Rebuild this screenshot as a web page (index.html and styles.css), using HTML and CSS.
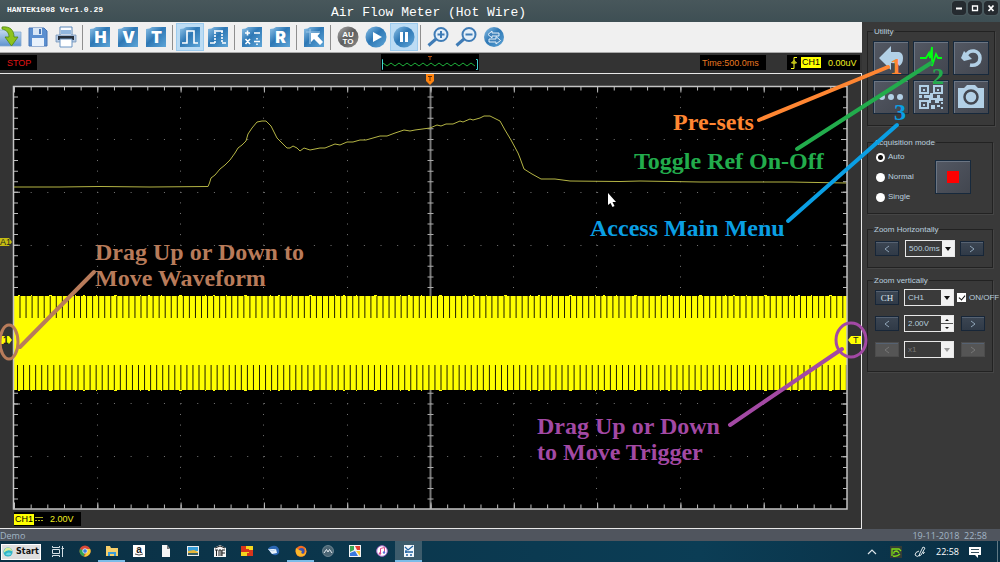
FILE: index.html
```
<!DOCTYPE html>
<html lang="en">
<head>
<meta charset="utf-8">
<title>HANTEK1008 Ver1.0.29</title>
<link rel="stylesheet" href="styles.css">
</head>
<body>
<svg class="defs" aria-hidden="true">
  <defs>
    <linearGradient id="blue" x1="0" y1="0" x2="1" y2="1"><stop offset="0" stop-color="#8fc3e8"/><stop offset=".45" stop-color="#2e78b5"/><stop offset="1" stop-color="#5fa6d8"/></linearGradient>
    <linearGradient id="grey" x1="0" y1="0" x2="1" y2="1"><stop offset="0" stop-color="#aaa"/><stop offset=".5" stop-color="#5c5c5c"/><stop offset="1" stop-color="#8d8d8d"/></linearGradient>
    <linearGradient id="folder" x1="0" y1="0" x2="0" y2="1"><stop offset="0" stop-color="#c3d9f0"/><stop offset="1" stop-color="#5e93cf"/></linearGradient>
    <path id="tile" d="M1 3Q5 3 7 1H21V21H1Z" fill="url(#blue)"/>
  </defs>
</svg>

<header class="titlebar">
  <span class="app-name">HANTEK1008 Ver1.0.29</span>
  <h1 class="title">Air Flow Meter (Hot Wire)</h1>
  <div class="window-buttons">
    <button aria-label="Minimize"><svg viewBox="0 0 14 14"><path d="M4 7.500H10" stroke-width="2"/></svg></button>
    <button aria-label="Maximize"><svg viewBox="0 0 14 14"><path d="M4.500 5H9.500V9.500H4.500Z" stroke-width="1.300"/></svg></button>
    <button aria-label="Close"><svg viewBox="0 0 14 14"><path d="M4.500 4.500L9.500 10M9.500 4.500L4.500 10" stroke-width="1.800"/></svg></button>
  </div>
</header>

<main class="main">
  <section class="left">
    <nav class="toolbar">
      <button aria-label="Open"><svg viewBox="0 0 22 22"><path d="M0 4H8L10 6H22V20H0Z" fill="url(#folder)" stroke="#85a9d2" stroke-width=".8"/><path d="M3 1C11 0 15 4 15 11H19L12.500 20L6 11H10C10 7 8 4 3 3Z" fill="#8fc31c" stroke="#4e8612" stroke-width=".8"/></svg></button>
      <button aria-label="Save"><svg viewBox="0 0 22 22"><path d="M2 2H17L20 5V20H2Z" fill="#5b8fd0" stroke="#4775b5"/><path d="M6 2H15V9H6Z" fill="#d8e6f5"/><path d="M12 3H14V8H12Z" fill="#4775b5"/><path d="M5 12H17V20H5Z" fill="#e8f1fb"/></svg></button>
      <button aria-label="Print"><svg viewBox="0 0 22 22"><path d="M5 1H17V10H5Z" fill="#fafcff" stroke="#5b87b8"/><path d="M6 4H16V8H6Z" fill="#91b7df"/><path d="M1 9H21V16H1Z" fill="#b7cbe4" stroke="#6c8cb5" stroke-width=".7"/><path d="M3 10H19V14H3Z" fill="#27303b"/><path d="M5 13H17V21H5Z" fill="#fff" stroke="#6a94c3"/></svg></button>
      <span class="sep"></span>
      <button aria-label="Horizontal"><svg viewBox="0 0 22 22"><use href="#tile"/><text class="tile-letter" x="11.500" y="17">H</text></svg></button>
      <button aria-label="Vertical"><svg viewBox="0 0 22 22"><use href="#tile"/><text class="tile-letter" x="11.500" y="17">V</text></svg></button>
      <button aria-label="Trigger"><svg viewBox="0 0 22 22"><use href="#tile"/><text class="tile-letter" x="11.500" y="17">T</text></svg></button>
      <span class="sep"></span>
      <button class="active" aria-label="Line display"><svg viewBox="0 0 22 22"><use href="#tile"/><path d="M3 17H8V5H15V17H19" class="tile-line"/></svg></button>
      <button aria-label="Dot display"><svg viewBox="0 0 22 22"><use href="#tile"/><path d="M3 17H8M15 17H19M7 5H16" class="tile-line"/><path d="M8 17V5M15 5V17" class="tile-line dashed"/></svg></button>
      <span class="sep"></span>
      <button aria-label="Math"><svg viewBox="0 0 22 22"><use href="#tile"/><path d="M4 7H9M6.500 4.500V9.500M13 7H19M4.500 13L9 18M9 13L4.500 18M13 15.500H19M16 12V13.500M16 17.500V19" class="tile-line"/></svg></button>
      <button aria-label="Reference"><svg viewBox="0 0 22 22"><use href="#tile"/><text class="tile-letter" x="11.500" y="17">R</text></svg></button>
      <span class="sep"></span>
      <button aria-label="Cursor"><svg viewBox="0 0 22 22"><use href="#tile"/><path d="M3 6H17M7 3V18" stroke="#9bc5e6" stroke-width="1.200"/><path d="M8 7H17L14.500 10L20 16L17 19L11 13L8 16Z" fill="#fff"/></svg></button>
      <span class="sep"></span>
      <button aria-label="Auto"><svg viewBox="0 0 22 22"><circle cx="11" cy="11" r="10.500" fill="url(#grey)"/><text class="auto-text" x="11" y="10.500">AU</text><text class="auto-text" x="11" y="17.500">TO</text></svg></button>
      <button aria-label="Run"><svg viewBox="0 0 22 22"><circle cx="11" cy="11" r="10.500" fill="url(#blue)"/><path d="M8 6L17 11L8 16Z" fill="#fff"/></svg></button>
      <button class="active" aria-label="Pause"><svg viewBox="0 0 22 22"><circle cx="11" cy="11" r="10.500" fill="url(#blue)"/><path d="M7 6H10V16H7ZM12 6H15V16H12Z" fill="#fff"/></svg></button>
      <span class="sep"></span>
      <button aria-label="Zoom in"><svg viewBox="0 0 22 22" fill="none" stroke="#3f7cb6"><circle cx="14" cy="8.500" r="6.500" fill="#e5eff8" stroke-width="2"/><path d="M9 13L1.500 19.500" stroke-width="3"/><path d="M10.500 8.500H17.500M14 5V12" stroke-width="2"/></svg></button>
      <button aria-label="Zoom out"><svg viewBox="0 0 22 22" fill="none" stroke="#3f7cb6"><circle cx="14" cy="8.500" r="6.500" fill="#e5eff8" stroke-width="2"/><path d="M9 13L1.500 19.500" stroke-width="3"/><path d="M10.500 8.500H17.500" stroke-width="2"/></svg></button>
      <button aria-label="Swap"><svg viewBox="0 0 22 22"><circle cx="11" cy="11" r="10" fill="url(#blue)"/><path d="M9 5L5 8.500L9 12V10H16V7H9ZM13 10.500V13H6V16H13V18L17.500 14.500Z" fill="#4384bb" stroke="#e6f1fa" stroke-width="1"/></svg></button>
    </nav>

    <div class="status">
      <span class="readout stop">STOP</span>
      <svg class="preview" viewBox="0 0 98 17">
        <path d="M2 5.500H1.500V15.500H2M95 5.500H96.500V15.500H95" fill="none" stroke="#43d6d6"/>
        <path d="M2 9L6 12L10 9L14 12L18 9L22 12L26 9L30 12L34 9L38 12L42 9L46 12L50 9L54 12L58 9L62 12L66 9L70 12L74 9L78 12L82 9L86 12L90 9L94 12" fill="none" stroke="#1fb13c"/>
        <path d="M47 2.500H51M49 2.500V6" stroke="#b34c10" fill="none"/>
      </svg>
      <div class="status-right">
        <span class="readout time">Time:500.0ms</span>
        <span class="readout trigger">
          <svg viewBox="0 0 8 14"><path d="M1 12.500H4V1.500H7M1.500 7L4 4.500L6.500 7Z" fill="none" stroke="#ffff20"/></svg>
          <b class="channel">CH1</b><span>0.00uV</span>
        </span>
      </div>
    </div>

    <div class="scope">
      <svg class="plot" viewBox="0 74 861 437" preserveAspectRatio="none">
        <rect x="14" y="86" width="833" height="423" fill="#000"/>
        <g stroke="#777" stroke-dasharray="1 15.660">
          <path d="M14 139.500H847M14 192.500H847M14 245.500H847M14 403.500H847M14 456.500H847"/>
        </g>
        <g stroke="#777" stroke-dasharray="1 9.580">
          <path d="M97.500 86V509M180.500 86V509M263.500 86V509M347.500 86V509M513.500 86V509M596.500 86V509M680.500 86V509M763.500 86V509"/>
        </g>
        <path d="M430.500 86V509" stroke="#777" stroke-width="2"/>
        <path d="M430.500 86V509" stroke="#aaa" stroke-width="6" stroke-dasharray="1 9.580"/>
        <g stroke="#bbb">
          <path d="M14 88.500H847M14 506.500H847" stroke-width="4" stroke-dasharray="1 15.660"/>
          <path d="M14 89.500H847M14 505.500H847" stroke-width="6" stroke-dasharray="1 82.300"/>
          <path d="M16 86V509M845 86V509" stroke-width="4" stroke-dasharray="1 9.580"/>
          <path d="M17 86V509M844 86V509" stroke-width="6" stroke-dasharray="1 51.900"/>
        </g>
        <rect x="14" y="296" width="833" height="94" fill="#ff0"/>
        <g stroke="#202000">
          <path d="M19.500 307H847" stroke-width="22" stroke-dasharray="1 5.050"/>
          <path d="M17 377.500H847" stroke-width="25" stroke-dasharray="1 5.050"/>
        </g>
        <path d="M18 295.500H847M18 390.500H847" stroke="#ff0" stroke-dasharray="2 11 1 17 3 23 1 7"/>
        <path d="M13.500 86.500H847V509H13.500Z" fill="none" stroke="#c4c4c4" stroke-width="1.500"/>
        <path class="trace" d="M14 187L60 187L100 186.500L150 187L208 186.500L209.500 183L211 178L215 175L220 169L225 165L230 160L235 153L238 148L242 145L246 141L248 134L252 128L257 122L262 121L266 121L271 126L277 138L281 142L287 148L290 148L293 146L297 148L300 151L304 148L310 150L320 148L325 148L330 146L335 144L340 145L347 142L353 142L360 140L366 140L380 136L387 136L395 133L404 130L410 131L415 130L430 128L437 125L441 126L446 124L453 124L460 121L463 122L470 119L473 120L480 118L484 116L490 116L494 118L500 121L505 130L511 140L518 153L520 158L524 169L532 174L541 179L555 179L570 181L620 181.500L640 181L700 182L740 182L790 182L846 183"/>
        <path d="M426 74H434V81L430 85L426 81Z" fill="#ff8410"/><path d="M428 76.500H432M430 76.500V81" stroke="#60300a" fill="none"/>
        <path d="M0 238H9L12 242L9 246H0Z" fill="#c5bd12"/><text class="marker" x="0" y="245">A1</text>
        <path d="M1 336H9L12 340L9 344H1Z" fill="#ff0"/><text class="marker bold" x="3" y="344">1</text>
        <path d="M861 336H851L848 340L851 344H861Z" fill="#ff0"/><text class="marker" x="853" y="343">T</text>
      </svg>
      <div class="channel-row"><span class="readout ch-info"><b class="channel">CH1</b><svg viewBox="0 0 8 6"><path d="M0 1.500H8" stroke="#b0b020" fill="none"/><path d="M0 4.500H8" stroke="#b0b020" stroke-dasharray="2 1" fill="none"/></svg><span>2.00V</span></span></div>
    </div>
  </section>

  <aside class="panel">
    <fieldset class="group utility">
      <legend>Utility</legend>
      <div class="tiles">
        <button class="tile" aria-label="Back"><svg viewBox="0 0 36 34"><path d="M6 17L18 5V11H26Q30 12 30 17Q30 23 26 25Q26 22 18 22V29Z" fill="#b2d0e6"/></svg></button>
        <button class="tile" aria-label="Reference waveform"><svg viewBox="0 0 36 34"><path d="M7 17H13L16 12L17 17L19 6V25L23 13L25 17H29" fill="none" stroke="#0f1" stroke-width="1.800"/></svg></button>
        <button class="tile" aria-label="Undo"><svg viewBox="0 0 36 34"><path d="M13 15C16 7 27 9 27 17C27 23 22 25 17 24" fill="none" stroke="#b2d0e6" stroke-width="3.500"/><path d="M8 17L11 10L19 18L11 20Z" fill="#b2d0e6"/></svg></button>
        <button class="tile" aria-label="Main menu"><svg viewBox="0 0 36 34" fill="#b2d0e6"><circle cx="9" cy="17" r="3"/><circle cx="18" cy="17" r="3"/><circle cx="27" cy="17" r="3"/></svg></button>
        <button class="tile" aria-label="QR code"><svg viewBox="0 0 36 34" fill="#b2d0e6"><path fill-rule="evenodd" d="M6 5H16V14H6ZM8 7V12H14V7ZM20 5H30V14H20ZM22 7V12H28V7ZM6 20H16V29H6ZM8 22V27H14V22Z"/><path d="M10 9H12V11H10ZM24 9H26V11H24ZM10 24H12V26H10ZM6 15H9V18H6ZM11 15H17V13H20V18H24V15H27V18H30V21H26V23H22V20H18V23H16V18H11ZM18 25H22V29H18ZM24 25H27V27H24ZM28 27H30V29H28ZM28 22H30V24H28Z"/></svg></button>
        <button class="tile" aria-label="Screenshot"><svg viewBox="0 0 36 34"><path d="M5 8H11L14 5H22L25 8H31V28H5Z" fill="#b2d0e6"/><circle cx="18" cy="17" r="6.500" fill="none" stroke="#434750" stroke-width="2.500"/></svg></button>
      </div>
    </fieldset>

    <fieldset class="group acquisition">
      <legend>Acquisition mode</legend>
      <div class="modes">
        <label><input type="radio" name="mode" checked>Auto</label>
        <label><input type="radio" name="mode">Normal</label>
        <label><input type="radio" name="mode">Single</label>
      </div>
      <button class="tile" aria-label="Stop"><svg viewBox="0 0 36 34"><path d="M12 11H24V23H12Z" fill="#f00"/></svg></button>
    </fieldset>

    <fieldset class="group zoom-h">
      <legend>Zoom Horizontally</legend>
      <div class="row">
        <button class="step" aria-label="Previous time base"><svg viewBox="0 0 8 8"><path d="M6 1L2 4L6 7"/></svg></button>
        <span class="combo"><select aria-label="Time base"><option>500.0ms</option></select></span>
        <button class="step" aria-label="Next time base"><svg viewBox="0 0 8 8"><path d="M2 1L6 4L2 7"/></svg></button>
      </div>
    </fieldset>

    <fieldset class="group zoom-v">
      <legend>Zoom vertically</legend>
      <div class="row">
        <button class="step ch">CH</button>
        <span class="combo"><select aria-label="Channel"><option>CH1</option></select></span>
        <label class="onoff"><input type="checkbox" checked>ON/OFF</label>
      </div>
      <div class="row">
        <button class="step" aria-label="Decrease volts"><svg viewBox="0 0 8 8"><path d="M6 1L2 4L6 7"/></svg></button>
        <span class="spin"><input type="text" value="2.00V" aria-label="Volts per division"><span class="spin-buttons"><button class="up" aria-label="Up"></button><button class="down" aria-label="Down"></button></span></span>
        <button class="step" aria-label="Increase volts"><svg viewBox="0 0 8 8"><path d="M2 1L6 4L2 7"/></svg></button>
      </div>
      <div class="row">
        <button class="step" disabled aria-label="Previous probe"><svg viewBox="0 0 8 8"><path d="M6 1L2 4L6 7"/></svg></button>
        <span class="combo off"><select disabled aria-label="Probe"><option>x1</option></select></span>
        <button class="step" disabled aria-label="Next probe"><svg viewBox="0 0 8 8"><path d="M2 1L6 4L2 7"/></svg></button>
      </div>
    </fieldset>
  </aside>
</main>

<div class="demo"><span>Demo</span><time>19-11-2018&nbsp; 22:58</time></div>

<footer class="taskbar">
  <button class="start"><svg viewBox="0 0 12 12"><circle cx="6" cy="6" r="5.500" fill="#31b5c7"/><path d="M1 7Q5 2 11 5Q10 0 5 1Q1 2 1 7Z" fill="#d8ec9a"/><path d="M3 9Q6 5 10 8Q8 11 3 9Z" fill="#6fd7e6"/></svg>Start</button>
  <div class="apps">
    <button aria-label="Task view"><svg viewBox="0 0 12 12" fill="none" stroke="#d5e0e6"><path d="M.5 1V2.500H7.500V1M.5 4.500H7.500V8.500H.5ZM.5 12V10.500H7.500V12M10.500 1V12M9.500 3.500H12"/></svg></button>
    <button aria-label="Chrome"><svg viewBox="0 0 12 12"><circle cx="6" cy="6" r="5.500" fill="#db4a38"/><path d="M1 4L6 6L5 11.500A5.500 5.500 0 0 1 1 4" fill="#32a350"/><path d="M6 4H11.200A5.500 5.500 0 0 1 5 11.500L8 7Z" fill="#f7cc35"/><circle cx="6" cy="6" r="2.300" fill="#3b7de0" stroke="#fff" stroke-width=".7"/></svg></button>
    <button class="open" aria-label="Explorer"><svg viewBox="0 0 12 12"><path d="M0 1H4L5 3H12V11H0Z" fill="#f6cf6b"/><path d="M2 11V7H10V11H8V9H4V11Z" fill="#3a9bd8"/></svg></button>
    <button aria-label="Amazon"><svg viewBox="0 0 12 12"><path d="M0 0H12V12H0Z" fill="#fff"/><text class="glyph" x="6" y="8">a</text><path d="M2 9Q6 11 10 9" stroke="#222" stroke-width=".8" fill="none"/></svg></button>
    <button aria-label="Document"><svg viewBox="0 0 12 12"><path d="M2 0H7L10 4V12H2Z" fill="#f4f5f5"/><path d="M7 0V4H10Z" fill="#777"/></svg></button>
    <button aria-label="Pictures"><svg viewBox="0 0 12 12"><path d="M0 1H12V11H0Z" fill="#eee"/><path d="M1 2H11V6H1Z" fill="#379ed9"/><path d="M1 6L7 5L11 7V9H1Z" fill="#e8b738"/><path d="M1 8H11V10H1Z" fill="#375e65"/></svg></button>
    <button aria-label="TOAF"><svg viewBox="0 0 12 12"><path d="M0 3L6 0L12 3V12H0Z" fill="#f7f7f7"/><path d="M1 3L6 1L11 3M1 5H4M2.500 5V11M5 5V11M5 5H7V11M8 11V5H11M8 8H11" stroke="#222" fill="none"/></svg></button>
    <button aria-label="Squares"><svg viewBox="0 0 12 12"><path d="M0 1H12V11H0Z" fill="#d8351b"/><path d="M5 1H12V5H8V8H6V11H0V7H4V4H5Z" fill="#f6d51e"/><path d="M4 4H8V7H4Z" fill="#d8351b"/></svg></button>
    <button aria-label="Thunderbird"><svg viewBox="0 0 12 12"><path d="M0 4Q3 0 8 1Q12 3 11 8Q8 12 4 9Z" fill="#2b67b4"/><path d="M0 4L8 4L9 8L4 9Z" fill="#e9f2fb"/><path d="M0 4L5 6L8 4" stroke="#8db3dc" stroke-width=".6" fill="none"/></svg></button>
    <button class="open" aria-label="Firefox"><svg viewBox="0 0 12 12"><circle cx="6" cy="6.300" r="5.500" fill="#f36b21"/><circle cx="6.500" cy="6" r="3" fill="#3655b5"/><path d="M1 3L4 5L7 6Q5 9 9 9Q12 6 9 1Q13 6 10 10Q6 13 2 10Q0 7 1 3" fill="#fcb72a"/></svg></button>
    <button aria-label="M app"><svg viewBox="0 0 12 12"><circle cx="6" cy="6" r="5.500" fill="#4c6675" stroke="#8499a4" stroke-width=".7"/><path d="M2 8L4.500 4.500L6 7L7.500 4.500L10 8" stroke="#e4edf2" fill="none"/></svg></button>
    <button aria-label="Maps"><svg viewBox="0 0 12 12"><path d="M0 0H12V12H0Z" fill="#f4f4f4"/><path d="M1 1H5V5L1 7Z" fill="#38a852"/><path d="M6 1H11V5H8Z" fill="#e23f32"/><path d="M1 8L6 6L9 11H1Z" fill="#3979df"/><path d="M7 6H11V11Z" fill="#f9c932"/></svg></button>
    <button aria-label="iTunes"><svg viewBox="0 0 12 12"><circle cx="6" cy="6" r="5.300" fill="#fff" stroke="#ae71ce"/><path d="M4.500 8.500V3.500L8.500 2.500V7.500" fill="none" stroke="#db4a91"/><circle cx="4" cy="8.500" r="1.200" fill="#db4a91"/><circle cx="8" cy="7.500" r="1.200" fill="#5a70de"/></svg></button>
    <button class="open current" aria-label="Hantek"><svg viewBox="0 0 12 12"><path d="M1 0H11V12H1Z" fill="#f2f7fb"/><path d="M2 2L5 5L10 1M2 7H10M3 10H5M7 10H9M3 5V8" stroke="#2263a0" stroke-width="1.300" fill="none"/></svg></button>
  </div>
  <div class="tray">
    <button aria-label="Hidden icons"><svg viewBox="0 0 12 12"><path d="M2 8L6 4L10 8" fill="none" stroke="#dce5e9" stroke-width="1.200"/></svg></button>
    <button aria-label="Graphics"><svg viewBox="0 0 12 12"><path d="M0 0H12V12H0Z" fill="#343c37"/><path d="M2 10V3H9L11 5M4 8Q3 5 7 5L9 7M3 10Q7 11 10 8" fill="none" stroke="#7eda18" stroke-width="1.300"/></svg></button>
    <button aria-label="Pen"><svg viewBox="0 0 12 12"><path d="M6 7L9 1L11 2L7 9L5 10ZM5 5Q1 6 1 9Q3 12 6 9M9 6Q12 6 9 8" fill="none" stroke="#dce5e9"/></svg></button>
    <time class="clock">22:58</time>
    <button aria-label="Notifications"><svg viewBox="0 0 12 12"><path d="M0 1H12V9H9V12L6 9H0Z" fill="#fff"/><path d="M2 3.500H10M2 6.500H10" stroke="#38515e"/></svg></button>
  </div>
</footer>

<svg class="annotations" viewBox="0 0 1000 562">
  <g class="ink orange"><path d="M888 67L759 120"/><text x="673" y="130">Pre-sets</text><text x="890" y="74">1</text></g>
  <g class="ink green"><path d="M931 63L797 149"/><text x="634" y="169">Toggle Ref On-Off</text><text x="932" y="84">2</text></g>
  <g class="ink azure"><path d="M897 125L788 221"/><text x="590" y="236">Access Main Menu</text><text x="894" y="120">3</text></g>
  <g class="ink brown"><path d="M20 347L94 272"/><ellipse cx="9" cy="342" rx="9" ry="17"/><text x="95" y="260">Drag Up or Down to</text><text x="95" y="286">Move Waveform</text></g>
  <g class="ink purple"><path d="M842 349L730 425"/><ellipse cx="851" cy="340" rx="15" ry="17"/><text x="537" y="434">Drag Up or Down</text><text x="537" y="460">to Move Trigger</text></g>
  <path d="M608 193V205L610.500 203L612.500 207L614.500 206L612.500 202H616Z" fill="#fff"/>
</svg>
</body>
</html>
```
FILE: styles.css
```
* { box-sizing: border-box; }
body {
  margin: 0;
  min-height: 100vh;
  display: flex;
  flex-direction: column;
  position: relative;
  overflow: hidden;
  background: #3a3a3a;
  color: #b9cfdf;
  font: 8px/12px "Liberation Sans", Arial, sans-serif;
}
button {
  display: flex;
  align-items: center;
  justify-content: center;
  margin: 0;
  padding: 0;
  border: 0;
  background: none;
  color: inherit;
  font: inherit;
}
svg { display: block; }
.defs { position: absolute; width: 0; height: 0; }

.titlebar {
  flex: none;
  display: grid;
  grid-template-columns: 1fr auto 1fr;
  height: 22px;
  padding: 0 2px 0 7px;
  background: linear-gradient(#48575b, #3e4f54);
  color: #fff;
}
.app-name { font: bold 8px/19px "Liberation Mono", monospace; }
.title { margin: 0 0 0 -148px; font: 13px/26px "Liberation Mono", monospace; }
.window-buttons { display: flex; justify-content: flex-end; gap: 2px; padding-top: 1px; }
.window-buttons button { width: 14px; height: 14px; border-radius: 3px; background: #252b30; box-shadow: 0 0 1px #89979c; }
.window-buttons svg { width: 14px; fill: none; stroke: #fff; }

.main { flex: 1; display: flex; min-height: 0; }
.left { flex: 1; min-width: 0; display: flex; flex-direction: column; background: #333; }
.toolbar {
  flex: none;
  display: flex;
  align-items: center;
  height: 31px;
  background: #f0f0f0;
  border-bottom: 1px solid #aaa;
}
.toolbar button { flex: none; width: 28px; height: 28px; }
.toolbar button:first-child { margin-left: -4px; }
.toolbar svg { width: 22px; height: 22px; overflow: visible; }
.toolbar .active { background: #bcdcf4; border: 1px solid #9ccbee; }
.sep { flex: none; width: 2px; height: 25px; margin: 0 2px; border-left: 1px solid #8e8e8e; }
.tile-letter { font: 900 16px Inter, sans-serif; fill: #fff; text-anchor: middle; }
.tile-line { fill: none; stroke: #fff; stroke-width: 1.600; }
.dashed { stroke-dasharray: 2 1; }
.auto-text { font: bold 8px "Liberation Sans", sans-serif; fill: #fff; text-anchor: middle; }

.status {
  flex: none;
  display: grid;
  grid-template-columns: 1fr auto 1fr;
  align-items: start;
  height: 20px;
  padding: 1px 2px 0 0;
}
.readout { display: flex; align-items: center; height: 15px; margin-top: 1px; background: #000; font-size: 9px; color: #f0f020; }
.stop { justify-self: start; width: 37px; padding-left: 7px; color: #e01515; }
.preview { width: 98px; height: 17px; background: #000; }
.status-right { display: flex; justify-content: flex-end; gap: 21px; }
.time { width: 66px; padding-left: 2px; color: #e87820; }
.trigger { width: 73px; padding-left: 3px; }
.trigger svg { width: 8px; margin-right: 3px; }
.trigger .channel { margin-right: 7px; }
.channel { padding: 0 1px; background: #ff0; color: #000; font-weight: normal; line-height: 11px; }

.scope {
  flex: 1;
  min-height: 0;
  display: flex;
  flex-direction: column;
  border: solid #e8e8e8;
  border-width: 1px 1px 1px 0;
}
.plot { flex: 1; min-height: 0; width: 100%; }
.trace { fill: none; stroke: #b5b545; stroke-width: 1; }
.marker { font: 9px "Liberation Sans", sans-serif; fill: #222; }
.marker.bold { font-weight: bold; font-size: 10px; }
.channel-row { flex: none; height: 17px; padding-left: 14px; }
.ch-info { width: 67px; height: 14px; }
.ch-info svg { width: 8px; margin: 0 7px 0 1px; }

.panel { flex: none; width: 138px; padding: 4px 5px 0; background: #393939; }
.group {
  min-width: 0;
  margin: 0;
  border: 1px solid #222;
  box-shadow: 1px 1px 0 #454545;
  padding: 0 5px;
}
.group legend { margin-left: 0; padding: 0 1px; line-height: 11px; }
.utility { height: 100px; margin-bottom: 11px; }
.tiles { display: grid; grid-template-columns: repeat(3, 36px); gap: 5px 4px; padding-top: 4px; }
.tile { width: 36px; height: 34px; background: linear-gradient(135deg, #535863, #42464f); border: 1px solid #17293c; box-shadow: inset 1px 1px #6b7583; }
.tile svg { width: 36px; height: 34px; flex: none; }
.acquisition, .zoom-h, .zoom-v { margin-right: 2px; }
.acquisition { height: 77px; margin-bottom: 10px; }
.acquisition > .tile { float: left; margin: 12px 0 0 15px; }
.modes { float: left; display: flex; flex-direction: column; gap: 8px; width: 47px; padding: 3px 0 0 3px; }
.modes label { display: flex; align-items: center; gap: 3px; }
.onoff { display: flex; align-items: center; gap: 3px; margin-left: -2px; white-space: nowrap; }
input[type="radio"] {
  appearance: none;
  flex: none;
  width: 9px;
  height: 9px;
  margin: 0;
  border-radius: 50%;
  background: #fff;
}
input[type="radio"]:checked { background: radial-gradient(circle, #111 0 2px, #fff 3px); }
.zoom-h { height: 44px; margin-bottom: 7px; }
.zoom-v { height: 97px; }
.row { display: flex; align-items: center; gap: 5px; height: 17px; padding-left: 2px; }
.zoom-h .row { gap: 6px; margin-top: 5px; }
.zoom-h .step:last-child { margin-left: -1px; }
.zoom-v .row { margin-top: 3px; margin-bottom: 9px; }
.zoom-v .step:last-child { margin-left: 2px; }
.step { flex: none; width: 24px; height: 15px; background: linear-gradient(#3c4653, #303a47); border: 1px solid #172638; box-shadow: inset 0 1px #566272; }
.step svg { width: 8px; fill: none; stroke: #90a5b8; }
.step:disabled { background: #555; border-color: #4c4c4c; }
.step:disabled svg { stroke: #777; }
.ch { font: 9px "Liberation Serif", serif; color: #dce6ed; }
.combo, .spin { flex: none; position: relative; display: flex; width: 50px; height: 17px; border: 1px solid #e8e8e8; background: #3a3a3a; }
select, .spin input { width: 100%; min-width: 0; appearance: none; border: 0; margin: 0; padding: 0 0 0 3px; background: none; color: #b9cfdf; font: inherit; opacity: 1; }
.combo::before { content: ""; position: absolute; right: 0; top: 0; bottom: 0; width: 12px; background: #f2f2f2; }
.combo::after { content: ""; position: absolute; right: 3px; top: 6px; border: solid transparent; border-width: 4px 3px 0; border-top-color: #111; }
.combo.off::after { border-top-color: #999; }
.off select { color: #777; }
.spin-buttons { flex: none; width: 12px; display: grid; gap: 1px; background: #555; }
.spin-buttons button { background: #f2f2f2; }
.spin-buttons button::after { content: ""; border: solid transparent; border-width: 0 2px 2px; border-bottom-color: #111; }
.spin-buttons .down::after { transform: rotate(180deg); }
input[type="checkbox"] { appearance: none; position: relative; flex: none; width: 9px; height: 9px; margin: 0; background: #fff; }
input[type="checkbox"]:checked::after { content: ""; position: absolute; left: 3px; top: 1px; width: 3px; height: 5px; border: solid #111; border-width: 0 1px 1px 0; transform: rotate(40deg); }

.demo { flex: none; display: flex; justify-content: space-between; height: 12px; padding-right: 13px; background: #50555e; color: #a2b6c6; font: 9px/13px "Open Sans", sans-serif; }

.taskbar { flex: none; display: flex; align-items: center; height: 21px; background: linear-gradient(90deg, #0b3044, #0b3d55 70%, #092e43); }
.start { gap: 3px; width: 40px; height: 16px; margin: 0 3px 0 1px; border: 1px solid #fff; background: #dedede; color: #111; font: bold 8px "DejaVu Sans", sans-serif; }
.start svg { width: 10px; flex: none; }
.apps, .tray { display: flex; height: 100%; }
.apps button { width: 27px; border-bottom: 2px solid transparent; }
.apps svg, .tray svg { width: 12px; height: 12px; }
.apps .open { border-bottom-color: #7cbce8; }
.apps .current { background: #3d5c6c; }
.tray { margin-left: auto; padding-right: 16px; margin-right: 2px; align-items: center; border-right: 1px solid #607985; }
.tray button { width: 24px; }
.tray button:last-child { width: 12px; }
.clock { width: 37px; padding-left: 4px; color: #fff; font: 9px/20px "Open Sans", sans-serif; }
.glyph { font: bold 10px "Liberation Sans", sans-serif; text-anchor: middle; fill: #222; }

.annotations { position: absolute; inset: 0; width: 100%; height: 100%; pointer-events: none; }
.ink { font: bold 24px "Liberation Serif", serif; fill: var(--ink); }
.ink path { stroke: var(--ink); stroke-width: 4; stroke-linecap: round; }
.ink ellipse { fill: none; stroke: var(--ink); stroke-width: 3; }
.orange { --ink: #ff8632; }
.green { --ink: #22ac4c; }
.azure { --ink: #0a9fe4; }
.brown { --ink: #b87b5a; }
.purple { --ink: #a349a4; }
```
